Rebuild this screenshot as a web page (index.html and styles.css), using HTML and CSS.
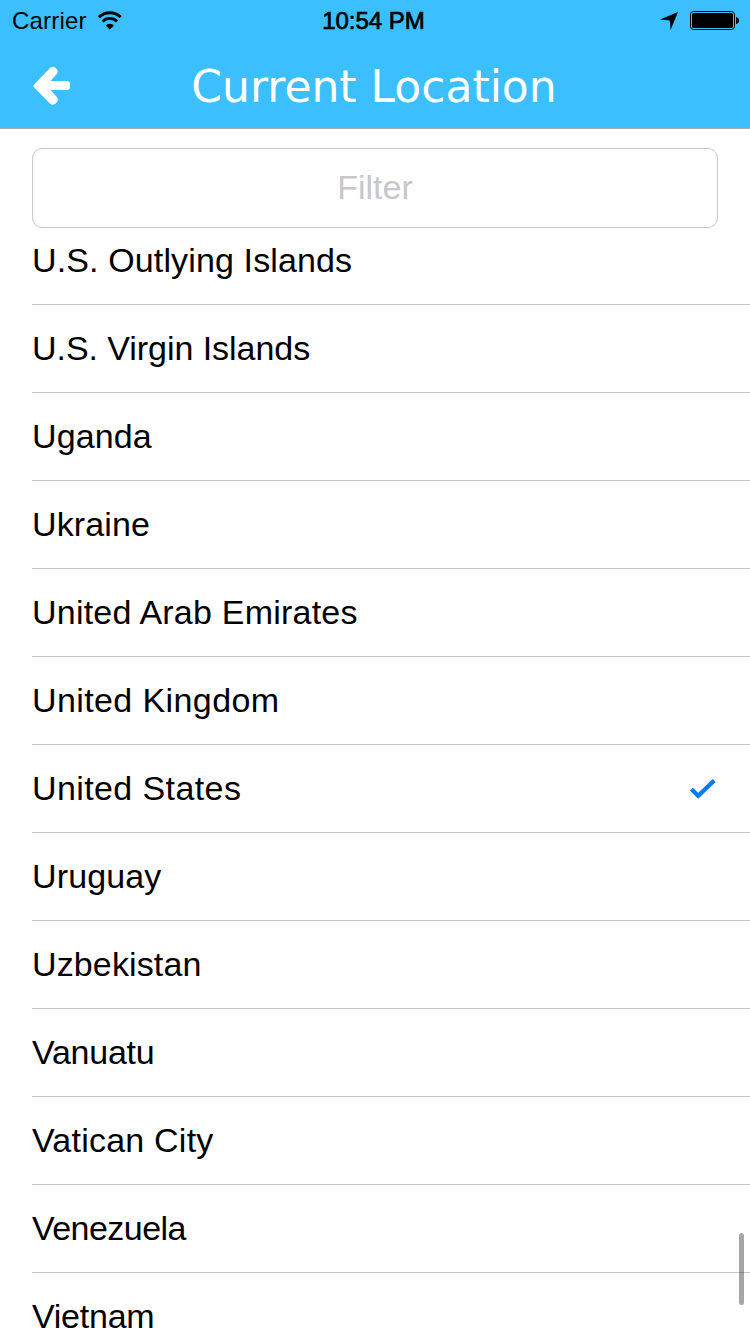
FILE: index.html
```html
<!DOCTYPE html>
<html lang="en">
<head>
<meta charset="utf-8">
<title>Current Location</title>
<link rel="stylesheet" href="styles.css">
</head>
<body>
<div class="screen">
  <header class="header">
    <div class="status">
      <div class="status-left">
        <span class="carrier">Carrier</span>
        <svg class="wifi" width="26" height="20" viewBox="0 0 26 20">
          <path d="M1.9 6.1 A15.8 15.8 0 0 1 23.7 6.1" fill="none" stroke="#000" stroke-width="3"/>
          <path d="M5.5 10.4 A10.4 10.4 0 0 1 20.1 10.4" fill="none" stroke="#000" stroke-width="2.8"/>
          <path d="M8.6 14.4 A6 6 0 0 1 17 14.4 L12.8 18.6 Z"/>
        </svg>
      </div>
      <span class="time">10:54 PM</span>
      <div class="status-right">
        <svg class="locate" width="18" height="18" viewBox="0 0 18 18"><path d="M18 0 L10.6 18 L9.8 8.4 L0 7.6 Z"/></svg>
        <svg class="battery" width="50" height="20" viewBox="0 0 50 20">
          <rect x=".5" y=".5" width="44" height="18" rx="3" fill="none" stroke="#000"/>
          <rect x="2" y="2" width="41" height="15" rx="1.5"/>
          <path d="M46 6 Q49 6.5 49 9.5 Q49 12.5 46 13 Z"/>
        </svg>
      </div>
    </div>
    <div class="navbar">
      <svg class="back" width="38" height="40" viewBox="0 0 38 40"><path fill="#fff" d="M1.2 18.3 L17 2 Q20 -.4 23 2.2 Q26 5 24 7.8 L17.5 15 H34 Q37 15 37 18 V21 Q37 24 34 24 H17.5 L24 31.2 Q26 34 23 37.2 Q20 40 17 37.5 L1.2 21.5 Q-.2 19.9 1.2 18.3 Z"/></svg>
      <h1 class="title">Current Location</h1>
    </div>
  </header>
  <div class="search"><div class="filter">Filter</div></div>
  <main class="list">
    <div class="row"><span>U.S. Outlying Islands</span></div>
    <div class="row snug"><span>U.S. Virgin Islands</span></div>
    <div class="row"><span>Uganda</span></div>
    <div class="row"><span>Ukraine</span></div>
    <div class="row wide"><span>United Arab Emirates</span></div>
    <div class="row wider"><span>United Kingdom</span></div>
    <div class="row wider"><span>United States</span>
      <svg class="check" width="28" height="24" viewBox="0 0 28 24"><path d="M2.4 12.2 L9.2 18.8 L25.2 3.4" fill="none" stroke="#007aff" stroke-width="4.2"/></svg>
    </div>
    <div class="row"><span>Uruguay</span></div>
    <div class="row"><span>Uzbekistan</span></div>
    <div class="row tight"><span>Vanuatu</span></div>
    <div class="row wide"><span>Vatican City</span></div>
    <div class="row tighter"><span>Venezuela</span></div>
    <div class="row tight"><span>Vietnam</span></div>
  </main>
  <div class="scrollbar"></div>
</div>
</body>
</html>
```
FILE: styles.css
```css
* { box-sizing: border-box; }
body { margin: 0; background: #fff; color: #000; font-family: "Liberation Sans", Arial, sans-serif; }
.screen { position: relative; display: flex; flex-direction: column; width: 750px; height: 1334px; overflow: hidden; }
.header { height: 129px; flex: none; background: #3bbfff; border-bottom: 1px solid #a9abad; }
.status { display: grid; grid-template-columns: 1fr auto 1fr; height: 40px; padding: 0 10px 0 12px; font-size: 24px; line-height: 42px; }
.status-left, .status-right { display: flex; align-items: center; }
.status-left { gap: 10px; }
.status-right { justify-content: flex-end; gap: 12px; }
.carrier { letter-spacing: .2px; }
.time { padding-right: 5px; -webkit-text-stroke: .7px #000; }
.navbar { display: grid; grid-template-columns: 38px 1fr 38px; align-items: center; height: 88px; padding: 4px 33px 0; }
.title { margin: 0; padding: 2px 2px 0 0; color: #fff; font: 400 44px/60px "DejaVu Sans", Verdana, sans-serif; text-align: center; white-space: nowrap; }
.search { flex: none; padding: 19px 32px 0; }
.filter { height: 80px; border: 1px solid #c8c8c8; border-radius: 10px; color: #c7c7cd; font-size: 34px; line-height: 76px; text-align: center; }
.list { flex: 1; min-height: 0; overflow: hidden; padding-left: 32px; }
.row { display: flex; align-items: center; justify-content: space-between; height: 88px; padding-right: 33px; border-bottom: 1px solid #c8c7cc; font-size: 34px; line-height: 40px; letter-spacing: .13px; white-space: nowrap; }
.row span { padding-bottom: 2px; }
.row:first-child { margin-top: -11px; }
.snug { letter-spacing: -.05px; }
.wide { letter-spacing: .22px; }
.wider { letter-spacing: .4px; }
.tight { letter-spacing: -.25px; }
.tighter { letter-spacing: -.55px; }
.scrollbar { position: absolute; left: 739px; top: 1233px; width: 5px; height: 72px; border-radius: 3px; background: rgba(0, 0, 0, .35); }
```
